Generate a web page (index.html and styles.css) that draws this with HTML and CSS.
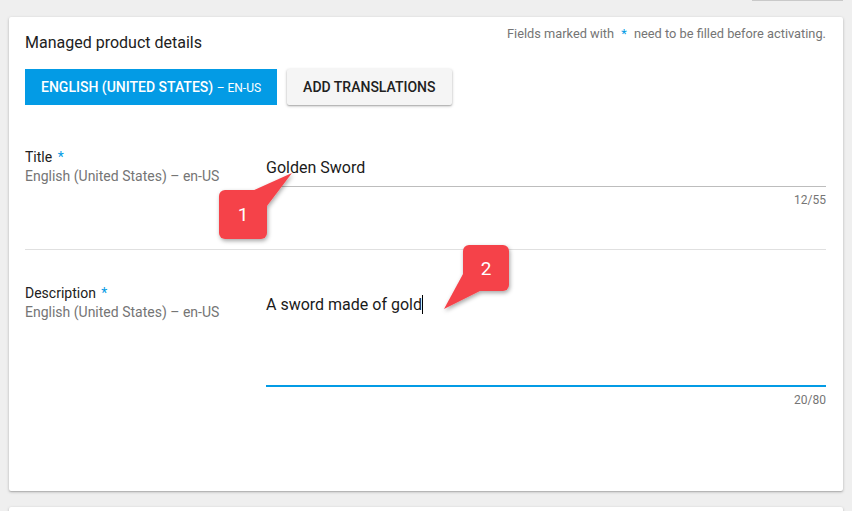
FILE: index.html
```html
<!DOCTYPE html>
<html>
<head>
<meta charset="utf-8">
<link rel="stylesheet" href="styles.css">
</head>
<body>
<div class="topbar"><div class="topstub"></div></div>
<div class="card">
  <div class="card-header">
    <h2 class="card-title">Managed product details</h2>
    <p class="note">Fields marked with <span class="req">*</span> need to be filled before activating.</p>
  </div>
  <div class="lang-tabs">
    <button class="btn btn-primary">ENGLISH (UNITED STATES) <span class="locale">– EN-US</span></button>
    <button class="btn btn-raised">ADD TRANSLATIONS</button>
  </div>
  <div class="form-row row-title">
    <div class="label">
      <div class="label-name">Title <span class="req">*</span></div>
      <div class="label-lang">English (United States) – en-US</div>
    </div>
    <div class="field">
      <div class="input">Golden Sword</div>
      <div class="counter">12/55</div>
    </div>
  </div>
  <div class="form-row row-desc">
    <div class="label">
      <div class="label-name">Description <span class="req">*</span></div>
      <div class="label-lang">English (United States) – en-US</div>
    </div>
    <div class="field">
      <div class="textarea">A sword made of gold<span class="caret"></span></div>
      <div class="counter">20/80</div>
    </div>
  </div>
</div>
<div class="card card-next"></div>

<svg class="callouts" width="852" height="511" viewBox="0 0 852 511">
  <defs>
    <filter id="sh" x="-30%" y="-30%" width="160%" height="160%">
      <feDropShadow dx="1" dy="2" stdDeviation="2" flood-color="#000" flood-opacity="0.35"/>
    </filter>
  </defs>
  <g filter="url(#sh)" fill="#f5434a">
    <rect x="219" y="190" width="48" height="49" rx="6"/>
    <polygon points="252,191 292,173 267,206"/>
  </g>
  <text x="243" y="221" class="callout-num" text-anchor="middle">1</text>
  <g filter="url(#sh)" fill="#f5434a">
    <rect x="463" y="245" width="46" height="46" rx="6"/>
    <polygon points="463,274 444,309 480,291"/>
  </g>
  <text x="486" y="275" class="callout-num" text-anchor="middle">2</text>
</svg>
</body>
</html>
```
FILE: styles.css
```css
html, body {
  margin: 0;
  padding: 0;
}
body {
  background: #efefef;
  font-family: Roboto, "Liberation Sans", Arial, sans-serif;
  color: #212121;
  width: 852px;
  height: 511px;
  overflow: hidden;
  position: relative;
}
.topbar {
  display: flex;
  justify-content: flex-end;
  padding-right: 9px;
  height: 1px;
}
.topstub {
  width: 91px;
  height: 1px;
  background: #c9c9c9;
}
.card {
  margin: 16px 9px 0 9px;
  width: 834px;
  height: 474px;
  box-sizing: border-box;
  background: #fff;
  border-radius: 2px;
  box-shadow: 0 1px 3px rgba(0,0,0,0.25), 0 1px 1px rgba(0,0,0,0.1);
  padding: 0 17px 0 16px;
}
.card-next {
  margin-top: 16px;
  height: 4px;
  border-radius: 2px 2px 0 0;
}
.card-header {
  display: flex;
  justify-content: space-between;
  align-items: flex-start;
  padding-top: 9px;
}
.card-title {
  margin: 7px 0 0 0;
  font-size: 16px;
  line-height: 20px;
  font-weight: 400;
  color: #212121;
}
.note {
  margin: 0;
  font-size: 12.8px;
  line-height: 16px;
  color: #757575;
}
.note .req {
  margin: 0 4px;
}
.req {
  color: #039be5;
}
.lang-tabs {
  display: flex;
  gap: 10px;
  margin-top: 16px;
}
.btn {
  height: 36px;
  padding: 0 16px;
  border: 0;
  border-radius: 2px;
  font-family: Roboto, "Liberation Sans", Arial, sans-serif;
  font-size: 14px;
  font-weight: 500;
  cursor: pointer;
}
.btn-primary {
  background: #039be5;
  color: #fff;
  border-radius: 0;
}
.btn-primary .locale {
  font-size: 12px;
  font-weight: 400;
}
.btn-raised {
  background: #f5f5f5;
  color: #212121;
  box-shadow: 0 1px 3px rgba(0,0,0,0.3), 0 1px 1px rgba(0,0,0,0.12);
}
.form-row {
  display: grid;
  grid-template-columns: 241px 1fr;
}
.row-title {
  padding-top: 42px;
  padding-bottom: 41px;
  border-bottom: 1px solid #e0e0e0;
}
.row-desc {
  padding-top: 33px;
}
.label-name {
  font-size: 14px;
  line-height: 20px;
  color: #212121;
}
.label-name .req {
  margin-left: 2px;
}
.label-lang {
  font-size: 14px;
  line-height: 18px;
  color: #757575;
}
.field {
  margin-top: 10px;
}
.row-title .field {
  margin-top: 9px;
}
.input {
  font-size: 16px;
  line-height: 24px;
  padding-bottom: 6px;
  border-bottom: 1px solid #bdbdbd;
  color: #1a1a1a;
}
.textarea {
  font-size: 16px;
  line-height: 24px;
  height: 92px;
  border-bottom: 2px solid #039be5;
  color: #1a1a1a;
}
.caret {
  display: inline-block;
  width: 1px;
  height: 19px;
  background: #000;
  vertical-align: -4px;
}
.counter {
  text-align: right;
  font-size: 12px;
  line-height: 16px;
  margin-top: 5px;
  color: #757575;
}
.callouts {
  position: absolute;
  left: 0;
  top: 0;
  pointer-events: none;
}
.callout-num {
  fill: #fff;
  font-family: Roboto, "Liberation Sans", Arial, sans-serif;
  font-size: 19px;
}
```
